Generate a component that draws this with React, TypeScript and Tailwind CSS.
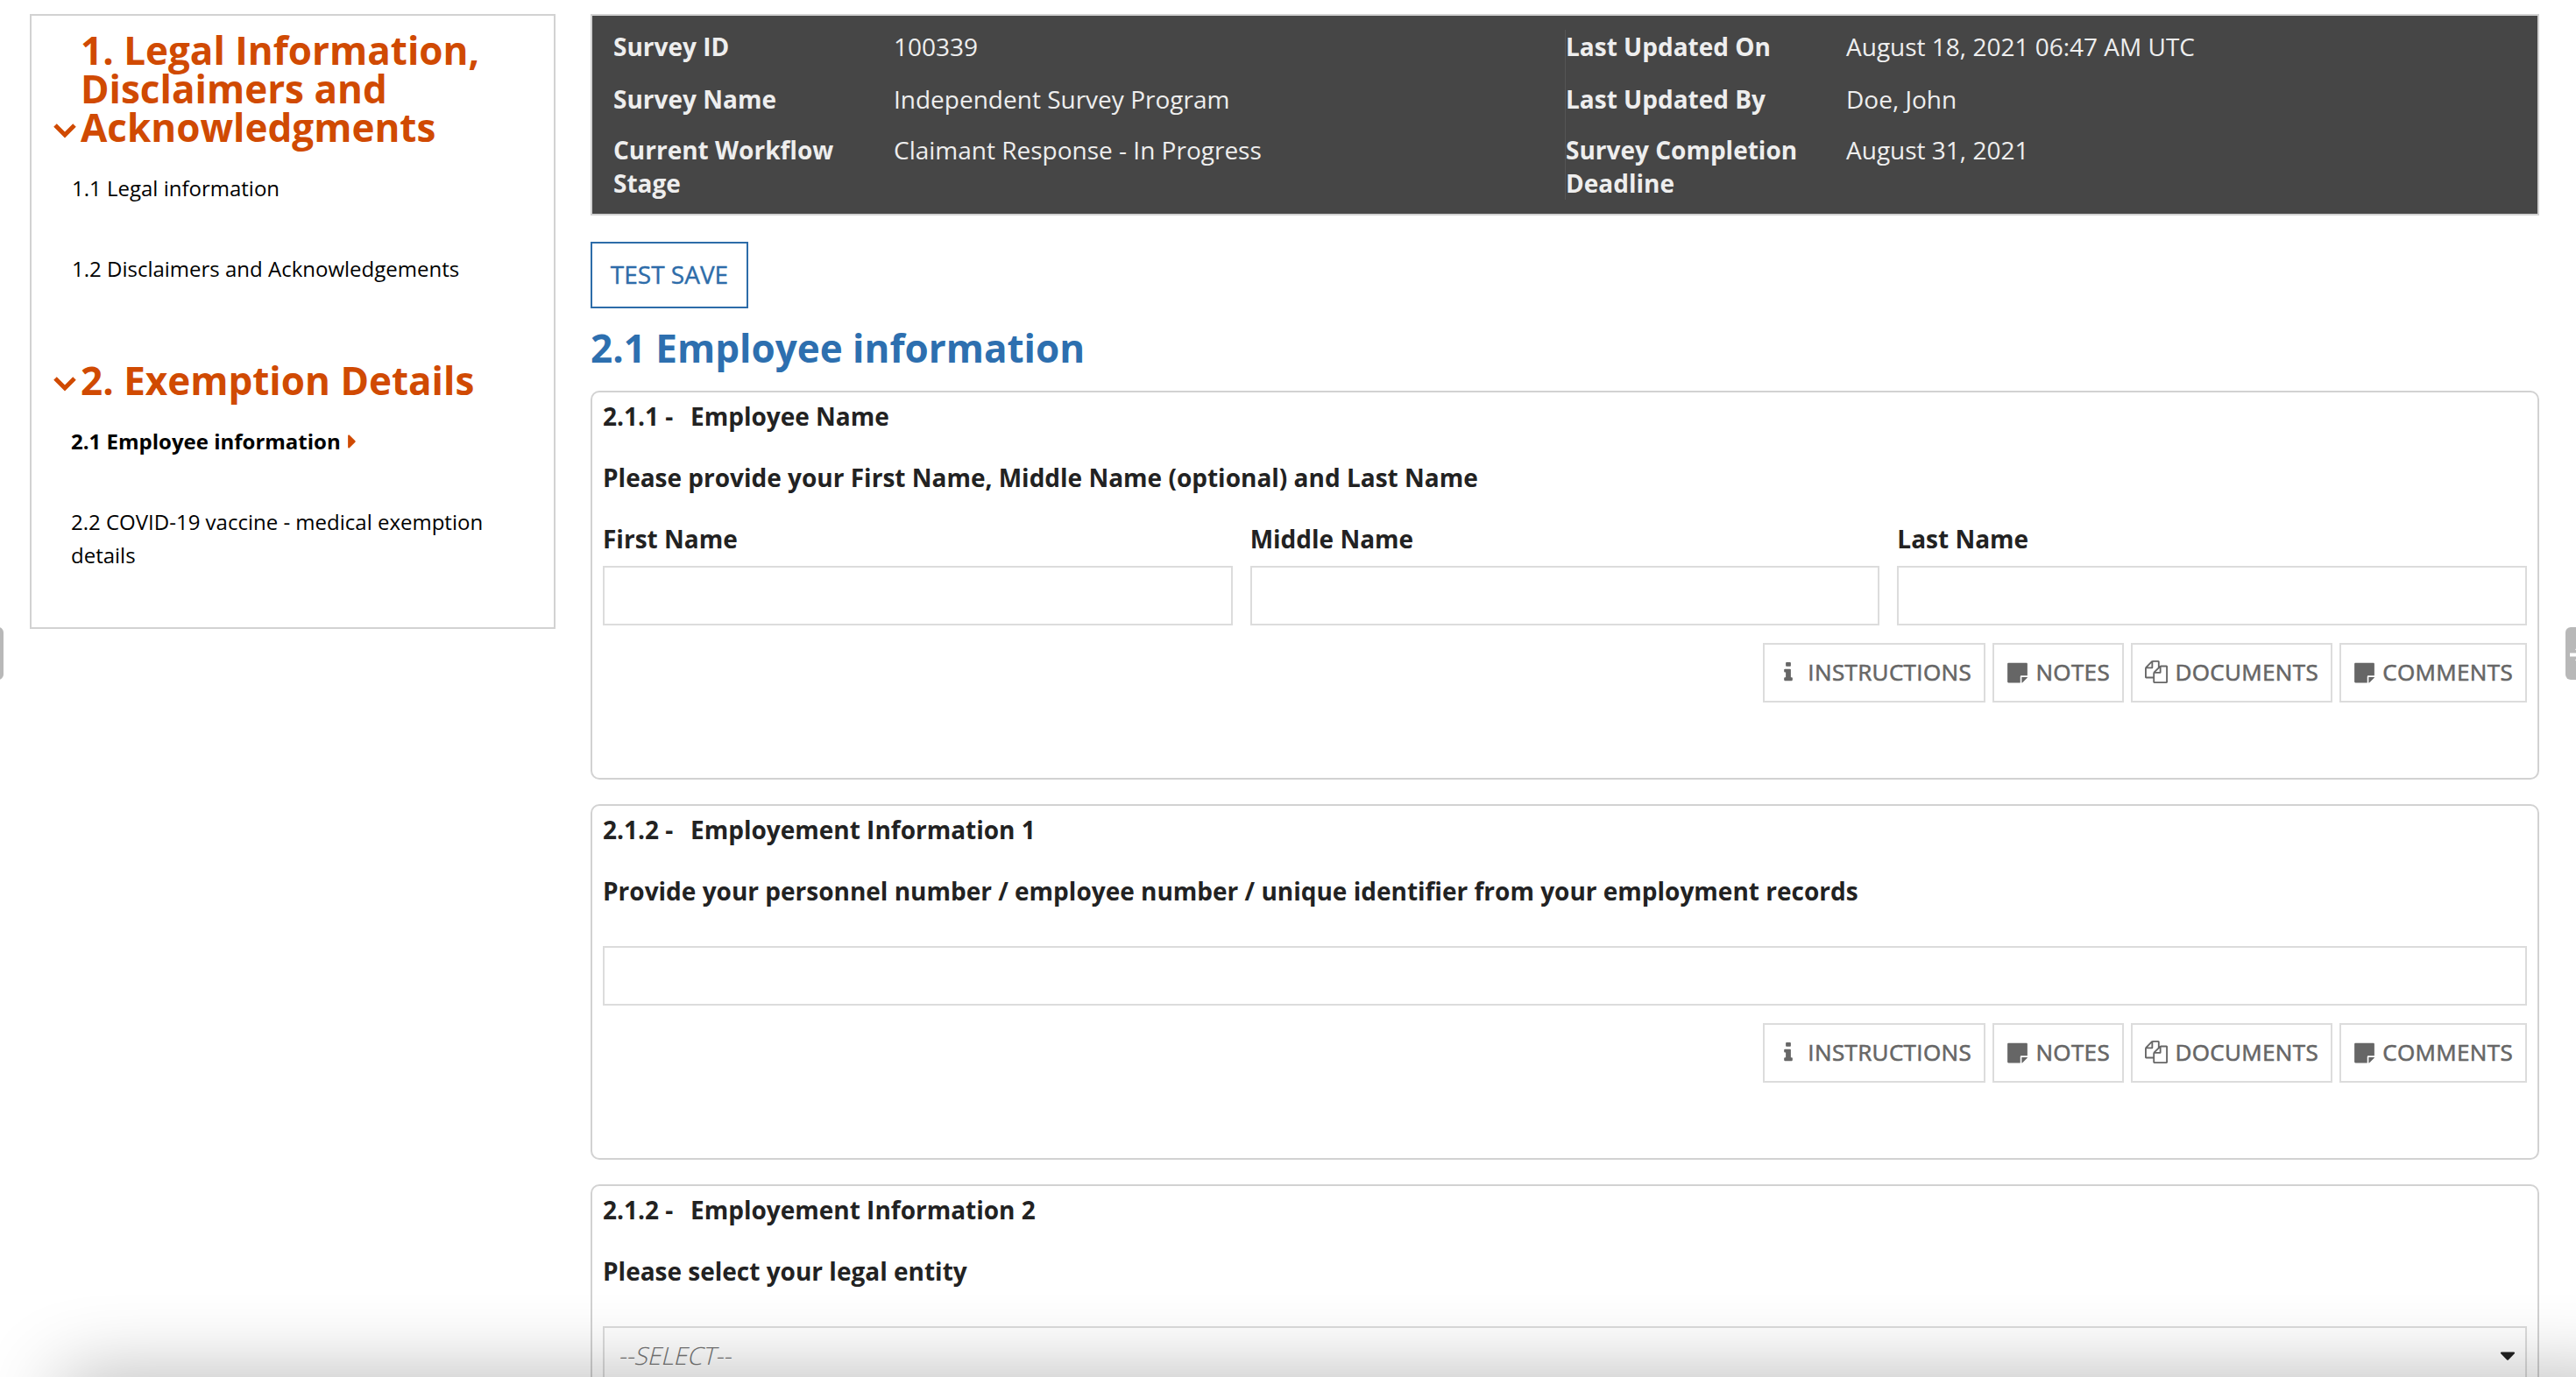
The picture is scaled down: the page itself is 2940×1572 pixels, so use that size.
import { FaCaretDown, FaCaretRight, FaStickyNote } from 'react-icons/fa';
import type { ReactNode } from 'react';

const surveyDetails = [
  ['Survey ID', '100339'],
  ['Survey Name', 'Independent Survey Program'],
  ['Current Workflow Stage', 'Claimant Response - In Progress'],
];

const updateDetails = [
  ['Last Updated On', 'August 18, 2021 06:47 AM UTC'],
  ['Last Updated By', 'Doe, John'],
  ['Survey Completion Deadline', 'August 31, 2021'],
];

const Chevron = () => (
  <svg viewBox="0 0 26 22" className="w-[26px] h-[22px] shrink-0 mb-[6px]" fill="none">
    <path d="M2 4 L13 15 L24 4" stroke="#d04a02" strokeWidth="5" />
  </svg>
);

const InfoIcon = () => (
  <svg viewBox="0 0 640 1792" className="ml-[8px] h-[27px] w-[10px]" fill="currentColor">
    <path d="M640 1344v128q0 26-19 45t-45 19h-512q-26 0-45-19t-19-45v-128q0-26 19-45t45-19h64v-384h-64q-26 0-45-19t-19-45v-128q0-26 19-45t45-19h384q26 0 45 19t19 45v576h64q26 0 45 19t19 45zm-128-1152v192q0 26-19 45t-45 19h-256q-26 0-45-19t-19-45v-192q0-26 19-45t45-19h256q26 0 45 19t19 45z" />
  </svg>
);

const FilesIcon = () => (
  <svg viewBox="0 0 1792 1792" className="w-[26px] h-[26px]" fill="currentColor">
    <path d="M1696 384q40 0 68 28t28 68v1216q0 40-28 68t-68 28h-960q-40 0-68-28t-28-68v-288h-544q-40 0-68-28t-28-68v-672q0-40 20-88t48-76l408-408q28-28 76-48t88-20h416q40 0 68 28t28 68v328q68-40 128-40h416zm-544 213l-299 299h299v-299zm-640-384l-299 299h299v-299zm196 647l316-316v-416h-384v416q0 40-28 68t-68 28h-416v640h512v-256q0-40 20-88t48-76zm956 804v-1152h-384v416q0 40-28 68t-68 28h-416v640h896z" />
  </svg>
);

const SidebarTitle = ({ children }: { children: ReactNode }) => (
  <h2 className="flex items-end pl-[25px] text-[44px] leading-[44px] font-bold text-[#d04a02]">
    <Chevron />
    <span className="pl-[5px]">{children}</span>
  </h2>
);

const DetailList = ({ rows, className }: { rows: string[][]; className?: string }) => (
  <dl className={`flex h-[194px] flex-col ${className ?? ''}`}>
    {rows.map(([label, value], i) => (
      <div key={label} className={i === 0 ? 'flex h-[60px]' : 'flex h-[58px]'}>
        <dt className="w-[320px] pr-[40px] font-bold">{label}</dt>
        <dd>{value}</dd>
      </div>
    ))}
  </dl>
);

const ActionButton = ({ icon, label, width }: { icon: ReactNode; label: string; width: string }) => (
  <button
    className={`${width} flex h-[68px] items-center justify-between border-2 border-[#dcdcdc] px-[14px] pb-[2px] text-[26px] tracking-[0.35px] text-[#666]`}
  >
    {icon}
    <span className="[-webkit-text-stroke:0.6px_#666]">{label}</span>
  </button>
);

const Actions = () => (
  <div className="mt-5 flex justify-end gap-2">
    <ActionButton width="w-[254px]" icon={<InfoIcon />} label="INSTRUCTIONS" />
    <ActionButton width="w-[150px]" icon={<FaStickyNote className="ml-[1px] mt-[2px] h-[26px] w-[23px]" />} label="NOTES" />
    <ActionButton width="w-[230px]" icon={<FilesIcon />} label="DOCUMENTS" />
    <ActionButton width="w-[214px]" icon={<FaStickyNote className="ml-[1px] mt-[2px] h-[26px] w-[23px]" />} label="COMMENTS" />
  </div>
);

const TextField = () => <input className="block h-[68px] w-full border-2 border-[#dcdcdc] bg-transparent" />;

interface QuestionProps {
  number: string;
  title: string;
  prompt: string;
  className: string;
  children: ReactNode;
}

const Question = ({ number, title, prompt, className, children }: QuestionProps) => (
  <section
    className={`${className} mb-7 rounded-[10px] border-2 border-[#d2d2d2] px-3 pt-2 text-[28px] leading-[38px] text-[#222]`}
  >
    <h3 className="flex font-bold">
      <span className="w-[100px]">{number} -</span>
      {title}
    </h3>
    <p className="mt-8 font-bold">{prompt}</p>
    {children}
  </section>
);

export default function App() {
  return (
    <div className="relative flex h-[1572px] w-[2940px] items-start overflow-hidden bg-white font-['Open_Sans',sans-serif]">
      <nav className="mt-4 ml-[34px] h-[702px] w-[600px] shrink-0 border-2 border-[#d2d2d2] pt-[17px] text-[24px] leading-[38px] text-black">
        <SidebarTitle>
          1. Legal Information,
          <br />
          Disclaimers and
          <br />
          Acknowledgments
        </SidebarTitle>
        <p className="mt-[29px] pl-[46px]">1.1 Legal information</p>
        <p className="mt-[54px] mb-[86px] pl-[46px]">1.2 Disclaimers and Acknowledgements</p>
        <SidebarTitle>2. Exemption Details</SidebarTitle>
        <p className="mt-[29px] flex items-center pl-[45px] font-bold">
          2.1 Employee information
          <FaCaretRight className="ml-[6px] h-[26px] w-[14px] text-[#d04a02]" />
        </p>
        <p className="mt-[54px] pl-[45px]">
          2.2 COVID-19 vaccine - medical exemption
          <br />
          details
        </p>
      </nav>

      <main className="mt-4 ml-10 w-[2224px] shrink-0">
        <header className="grid h-[230px] grid-cols-[1086px_1fr] border-2 border-[#d2d2d2] bg-[#464646] pt-4 pl-6 text-[28px] leading-[38px] text-[#eee]">
          <DetailList rows={surveyDetails} />
          <DetailList rows={updateDetails} className="border-l border-[#555]" />
        </header>

        <button className="mt-[30px] flex h-[76px] w-[180px] items-center justify-center border-2 border-[#2d6ca9] pb-[2px] text-[28px] text-[#2d6ca9] [-webkit-text-stroke:0.4px_#2d6ca9]">
          TEST SAVE
        </button>
        <h1 className="mt-[15px] mb-[19px] text-[44px] leading-[60px] font-bold text-[#2d6faf]">2.1 Employee information</h1>

        <Question number="2.1.1" title="Employee Name" prompt="Please provide your First Name, Middle Name (optional) and Last Name" className="h-[444px]">
          <div className="mt-8 grid grid-cols-3 gap-5">
            {['First Name', 'Middle Name', 'Last Name'].map((label) => (
              <label key={label} className="font-bold">
                <span className="mb-3 block">{label}</span>
                <TextField />
              </label>
            ))}
          </div>
          <Actions />
        </Question>

        <Question
          number="2.1.2"
          title="Employement Information 1"
          prompt="Provide your personnel number / employee number / unique identifier from your employment records"
          className="h-[406px]"
        >
          <div className="mt-[44px]">
            <TextField />
          </div>
          <Actions />
        </Question>

        <Question number="2.1.2" title="Employement Information 2" prompt="Please select your legal entity" className="h-[406px]">
          <div className="mt-[44px] flex h-[68px] items-center justify-between border-2 border-[#dcdcdc] pr-[10px] pb-[2px] pl-[18px] text-[28px] text-[#757575]">
            <span className="-skew-x-[14deg] font-light">--SELECT--</span>
            <FaCaretDown className="h-[28px] w-[20px] text-[#222]" />
          </div>
        </Question>
      </main>

      {/* Collapsed side panel handles */}
      <div className="absolute top-[716px] left-[-10px] h-[60px] w-[14px] rounded-[6px] bg-[#b8b8b8]" />
      <div className="absolute top-[716px] left-[2928px] h-[60px] w-[24px] rounded-[6px] bg-[#b8b8b8]">
        <svg viewBox="0 0 24 60" className="h-[60px] w-[24px]" fill="none" stroke="white" strokeWidth="4">
          <path d="M5 31.5 H24 M12.5 24 L20 31.5 L12.5 39" />
        </svg>
      </div>

      {/* Shadow rising from the bottom edge of the window */}
      <div className="pointer-events-none absolute top-[1592px] left-[90px] h-[40px] w-[2900px] shadow-[0_0_90px_20px_rgba(0,0,0,0.3)]" />
    </div>
  );
}
